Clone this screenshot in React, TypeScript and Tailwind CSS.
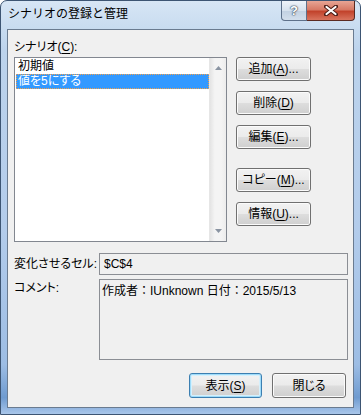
import type { ReactNode } from "react";

// Win7 style push button
// ━━━━━━━━━━━━━━━━━━━━━━━━━━━━━━━━━━━━━━━━━━━━━━━━━━━━━━━━━━━━━━━━━━━━━━

interface PushButtonProps {
  children: ReactNode;
  className?: string;
  isDefault?: boolean;
}

function PushButton({ children, className = "", isDefault = false }: PushButtonProps) {
  const edge = isDefault
    ? "border-[#3c7fb1] shadow-[inset_0_0_0_1px_#9fdcfa,inset_0_0_0_2px_#d6f0fc]"
    : "border-[#707070] shadow-[inset_0_0_0_1px_#fbfbfb]";
  return (
    <div
      className={`flex items-center justify-center whitespace-nowrap rounded-[3px] border bg-[linear-gradient(to_bottom,#f2f2f2_0%,#ebebeb_48%,#dddddd_52%,#cfcfcf_100%)] text-[12px] leading-none text-black ${edge} ${className}`}
    >
      {children}
    </div>
  );
}

function Key({ children }: { children: ReactNode }) {
  return <span className="underline underline-offset-[2px]">{children}</span>;
}

// Scenario list box
// ━━━━━━━━━━━━━━━━━━━━━━━━━━━━━━━━━━━━━━━━━━━━━━━━━━━━━━━━━━━━━━━━━━━━━━

function ScenarioList() {
  return (
    <div className="flex h-[185px] w-[213px] border border-[#828790] bg-white">
      <div className="flex-1 pt-[1px] pl-[1px]">
        <div className="h-[15px] overflow-hidden pl-[2px] text-[12px] leading-[15px]">初期値</div>
        <div className="h-[15px] overflow-hidden border border-dotted border-[#f2a04a] bg-[#3399ff] pl-[1px] text-[12px] leading-[13px] text-white">
          値を5にする
        </div>
      </div>
      <div className="flex w-[17px] flex-col items-center justify-between border-l border-[#e6e6e6] bg-[linear-gradient(to_right,#e4e4e4,#f4f4f4_30%,#f4f4f4_70%,#ececec)] py-[8px]">
        <svg width="7" height="4" viewBox="0 0 7 4">
          <path d="M3.5 0 L7 4 L0 4 Z" fill="#8a94a2" />
        </svg>
        <svg width="7" height="4" viewBox="0 0 7 4">
          <path d="M0 0 L7 0 L3.5 4 Z" fill="#8a94a2" />
        </svg>
      </div>
    </div>
  );
}

// Dialog
// ━━━━━━━━━━━━━━━━━━━━━━━━━━━━━━━━━━━━━━━━━━━━━━━━━━━━━━━━━━━━━━━━━━━━━━

export default function App() {
  return (
    <div className="h-[415px] w-[361px] bg-white font-['Liberation_Sans','Noto_Sans_CJK_JP',sans-serif] text-[12px] text-black">
      <div className="flex h-full flex-col rounded-t-[7px] border border-[#3d5573] bg-[linear-gradient(to_bottom,#d7e6f5_0%,#bcd3ec_12%,#b3cceb_55%,#9dbde4_88%,#6f9bd0_96%,#a9c6ea_100%)] px-[6px] pb-[6px]">
        {/* title bar */}
        <div className="flex h-[28px] items-start">
          <div className="pt-[5px] pl-[1px] text-[12px] leading-[16px] text-black">シナリオの登録と管理</div>
          <div className="ml-auto mr-[-1px] flex">
            <div className="flex h-[20px] w-[26px] items-center justify-center rounded-bl-[4px] border border-t-0 border-[#5e718b] bg-[linear-gradient(to_bottom,#eef3f9,#d7e2ee_50%,#c2d1e2_52%,#d3dfec)] text-[13px] font-bold leading-none text-white [text-shadow:0_0_1px_#3c4b5e,0_0_1px_#3c4b5e,0_0_2px_#3c4b5e]">
              ?
            </div>
            <div className="flex h-[20px] w-[48px] items-center justify-center rounded-br-[4px] border border-t-0 border-l-0 border-[#5a2a22] bg-[linear-gradient(to_bottom,#e7a595,#d77a66_45%,#c2432c_55%,#d8745e)]">
              <svg width="14" height="11" viewBox="0 0 14 11">
                <path
                  d="M2 1.5 L12 9.5 M12 1.5 L2 9.5"
                  stroke="#4a1c16"
                  strokeWidth="4"
                  strokeLinecap="round"
                />
                <path d="M2.5 2 L11.5 9 M11.5 2 L2.5 9" stroke="#ffffff" strokeWidth="2.2" strokeLinecap="round" />
              </svg>
            </div>
          </div>
        </div>

        {/* client area */}
        <div className="flex flex-1 flex-col border border-[#6a7b90] bg-[#f0f0f0] pt-[9px] pl-[6px] pr-[5px] [font-feature-settings:'palt']">
          <div className="leading-[16px]">
            シナリオ(<Key>C</Key>):
          </div>
          <div className="mt-[2px] flex">
            <ScenarioList />
            <div className="ml-[9px] flex flex-col">
              <PushButton className="h-[24px] w-[75px]">
                追加(<Key>A</Key>)...
              </PushButton>
              <PushButton className="mt-[10px] h-[24px] w-[75px]">
                削除(<Key>D</Key>)
              </PushButton>
              <PushButton className="mt-[10px] h-[24px] w-[75px]">
                編集(<Key>E</Key>)...
              </PushButton>
              <PushButton className="mt-[19px] h-[24px] w-[75px]">
                コピー(<Key>M</Key>)...
              </PushButton>
              <PushButton className="mt-[10px] h-[24px] w-[75px]">
                情報(<Key>U</Key>)...
              </PushButton>
            </div>
          </div>

          <div className="mt-[11px] flex items-center">
            <div className="w-[85px] whitespace-nowrap leading-[16px]">変化させるセル:</div>
            <div className="flex h-[22px] w-[249px] items-center border border-[#8b8e94] pl-[4px] leading-[16px]">
              $C$4
            </div>
          </div>

          <div className="mt-[4px] flex items-start">
            <div className="w-[85px] whitespace-nowrap pt-[1px] leading-[16px]">コメント:</div>
            <div className="h-[81px] w-[249px] border border-[#8b8e94] pt-[3px] pl-[2px] leading-[16px] [font-feature-settings:normal]">
              作成者：IUnknown 日付：2015/5/13
            </div>
          </div>

          <div className="mt-[13px] flex justify-end pr-[2px]">
            <PushButton isDefault className="h-[25px] w-[73px]">
              表示(<Key>S</Key>)
            </PushButton>
            <PushButton className="ml-[10px] h-[25px] w-[74px]">閉じる</PushButton>
          </div>
        </div>
      </div>
    </div>
  );
}
